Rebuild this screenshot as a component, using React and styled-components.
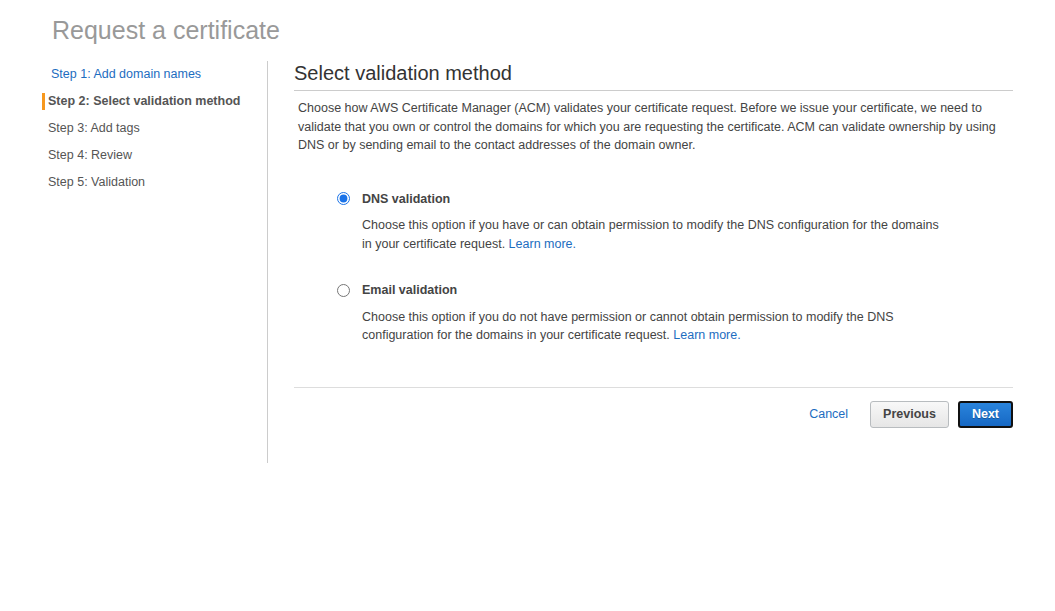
import React, { useState } from "react";
import styled, { createGlobalStyle } from "styled-components";

const GlobalStyle = createGlobalStyle`
  body {
    margin: 0;
    background: #ffffff;
    font-family: "Liberation Sans", Arial, sans-serif;
    color: #444;
  }
`;

const Page = styled.div`
  width: 1055px;
  min-height: 611px;
  box-sizing: border-box;
  padding: 0 42px;
`;

const Title = styled.h1`
  margin: 0;
  padding: 16px 0 0 10px;
  height: 45px;
  box-sizing: border-box;
  font-size: 25px;
  line-height: 29px;
  font-weight: normal;
  color: #999999;
`;

const Layout = styled.div`
  display: grid;
  grid-template-columns: 226px 1fr;
  margin-top: 16px;
`;

const Sidebar = styled.nav`
  display: flex;
  flex-direction: column;
  gap: 10px;
  height: 402px;
  box-sizing: border-box;
  padding-top: 5px;
  border-right: 1px solid #cccccc;
`;

const StepItem = styled.div`
  padding-left: ${(p) => (p.$link ? "6px" : "3px")};
  border-left: 3px solid ${(p) => (p.$active ? "#f7981d" : "transparent")};
  font-size: 12.5px;
  line-height: 17px;
  font-weight: ${(p) => (p.$active ? "bold" : "normal")};
  color: ${(p) => (p.$link ? "#1d6dbf" : "#555555")};
`;

const Main = styled.main`
  padding-left: 26px;
`;

const Heading = styled.h2`
  margin: 0;
  padding: 1px 0 5px;
  font-size: 20px;
  line-height: 23px;
  font-weight: normal;
  color: #333333;
  border-bottom: 1px solid #cccccc;
`;

const Intro = styled.p`
  margin: 8px 0 0;
  padding: 0 4px;
  font-size: 12.5px;
  line-height: 18.5px;
  color: #444444;
`;

const Options = styled.div`
  display: flex;
  flex-direction: column;
  gap: 28px;
  padding: 35px 0 42px 43px;
  border-bottom: 1px solid #dddddd;
`;

const Option = styled.label`
  display: grid;
  grid-template-columns: 13px 588px;
  column-gap: 12px;
  row-gap: 8px;
  cursor: pointer;
`;

const Radio = styled.input`
  margin: 0;
  width: 13px;
  height: 13px;
  align-self: center;
  accent-color: #1a73e8;
`;

const OptionTitle = styled.span`
  font-size: 12.5px;
  line-height: 18.5px;
  font-weight: bold;
  color: #444444;
`;

const OptionText = styled.span`
  grid-column: 2;
  font-size: 12.5px;
  line-height: 18.5px;
  color: #444444;
`;

const Link = styled.a`
  color: #1d6dbf;
  text-decoration: none;
`;

const Actions = styled.div`
  display: flex;
  justify-content: flex-end;
  align-items: center;
  padding-top: 13px;
`;

const CancelLink = styled.a`
  margin-right: 22px;
  font-size: 12.5px;
  color: #1d6dbf;
  text-decoration: none;
`;

const Button = styled.button`
  height: 27px;
  box-sizing: border-box;
  padding: 0 12px;
  margin-left: ${(p) => (p.$primary ? "9px" : "0")};
  font-family: "Liberation Sans", Arial, sans-serif;
  font-size: 12.5px;
  font-weight: bold;
  border-radius: 3px;
  color: ${(p) => (p.$primary ? "#ffffff" : "#444444")};
  border: ${(p) => (p.$primary ? "2px solid #111111" : "1px solid #b8bcbf")};
  background: ${(p) =>
    p.$primary
      ? "linear-gradient(#2a84dc, #1668c4)"
      : "linear-gradient(#f8f8f8, #e6e6e6)"};
  text-shadow: ${(p) => (p.$primary ? "0 1px 0 rgba(0,0,0,0.25)" : "none")};
`;

const steps = [
  "Step 1: Add domain names",
  "Step 2: Select validation method",
  "Step 3: Add tags",
  "Step 4: Review",
  "Step 5: Validation",
];

const App = () => {
  const [method, setMethod] = useState("dns");

  return (
    <>
      <GlobalStyle />
      <Page>
        <Title>Request a certificate</Title>
        <Layout>
          <Sidebar>
            {steps.map((s, i) => (
              <StepItem key={s} $link={i === 0} $active={i === 1}>
                {s}
              </StepItem>
            ))}
          </Sidebar>
          <Main>
            <Heading>Select validation method</Heading>
            <Intro>
              Choose how AWS Certificate Manager (ACM) validates your certificate request. Before we
              issue your certificate, we need to validate that you own or control the domains for
              which you are requesting the certificate. ACM can validate ownership by using DNS or by
              sending email to the contact addresses of the domain owner.
            </Intro>
            <Options>
              <Option>
                <Radio
                  type="radio"
                  name="method"
                  checked={method === "dns"}
                  onChange={() => setMethod("dns")}
                />
                <OptionTitle>DNS validation</OptionTitle>
                <OptionText>
                  Choose this option if you have or can obtain permission to modify the DNS
                  configuration for the domains in your certificate request. <Link href="#">Learn more.</Link>
                </OptionText>
              </Option>
              <Option>
                <Radio
                  type="radio"
                  name="method"
                  checked={method === "email"}
                  onChange={() => setMethod("email")}
                />
                <OptionTitle>Email validation</OptionTitle>
                <OptionText>
                  Choose this option if you do not have permission or cannot obtain permission to
                  modify the DNS configuration for the domains in your certificate request.{" "}
                  <Link href="#">Learn more.</Link>
                </OptionText>
              </Option>
            </Options>
            <Actions>
              <CancelLink href="#">Cancel</CancelLink>
              <Button>Previous</Button>
              <Button $primary>Next</Button>
            </Actions>
          </Main>
        </Layout>
      </Page>
    </>
  );
};

export default App;
